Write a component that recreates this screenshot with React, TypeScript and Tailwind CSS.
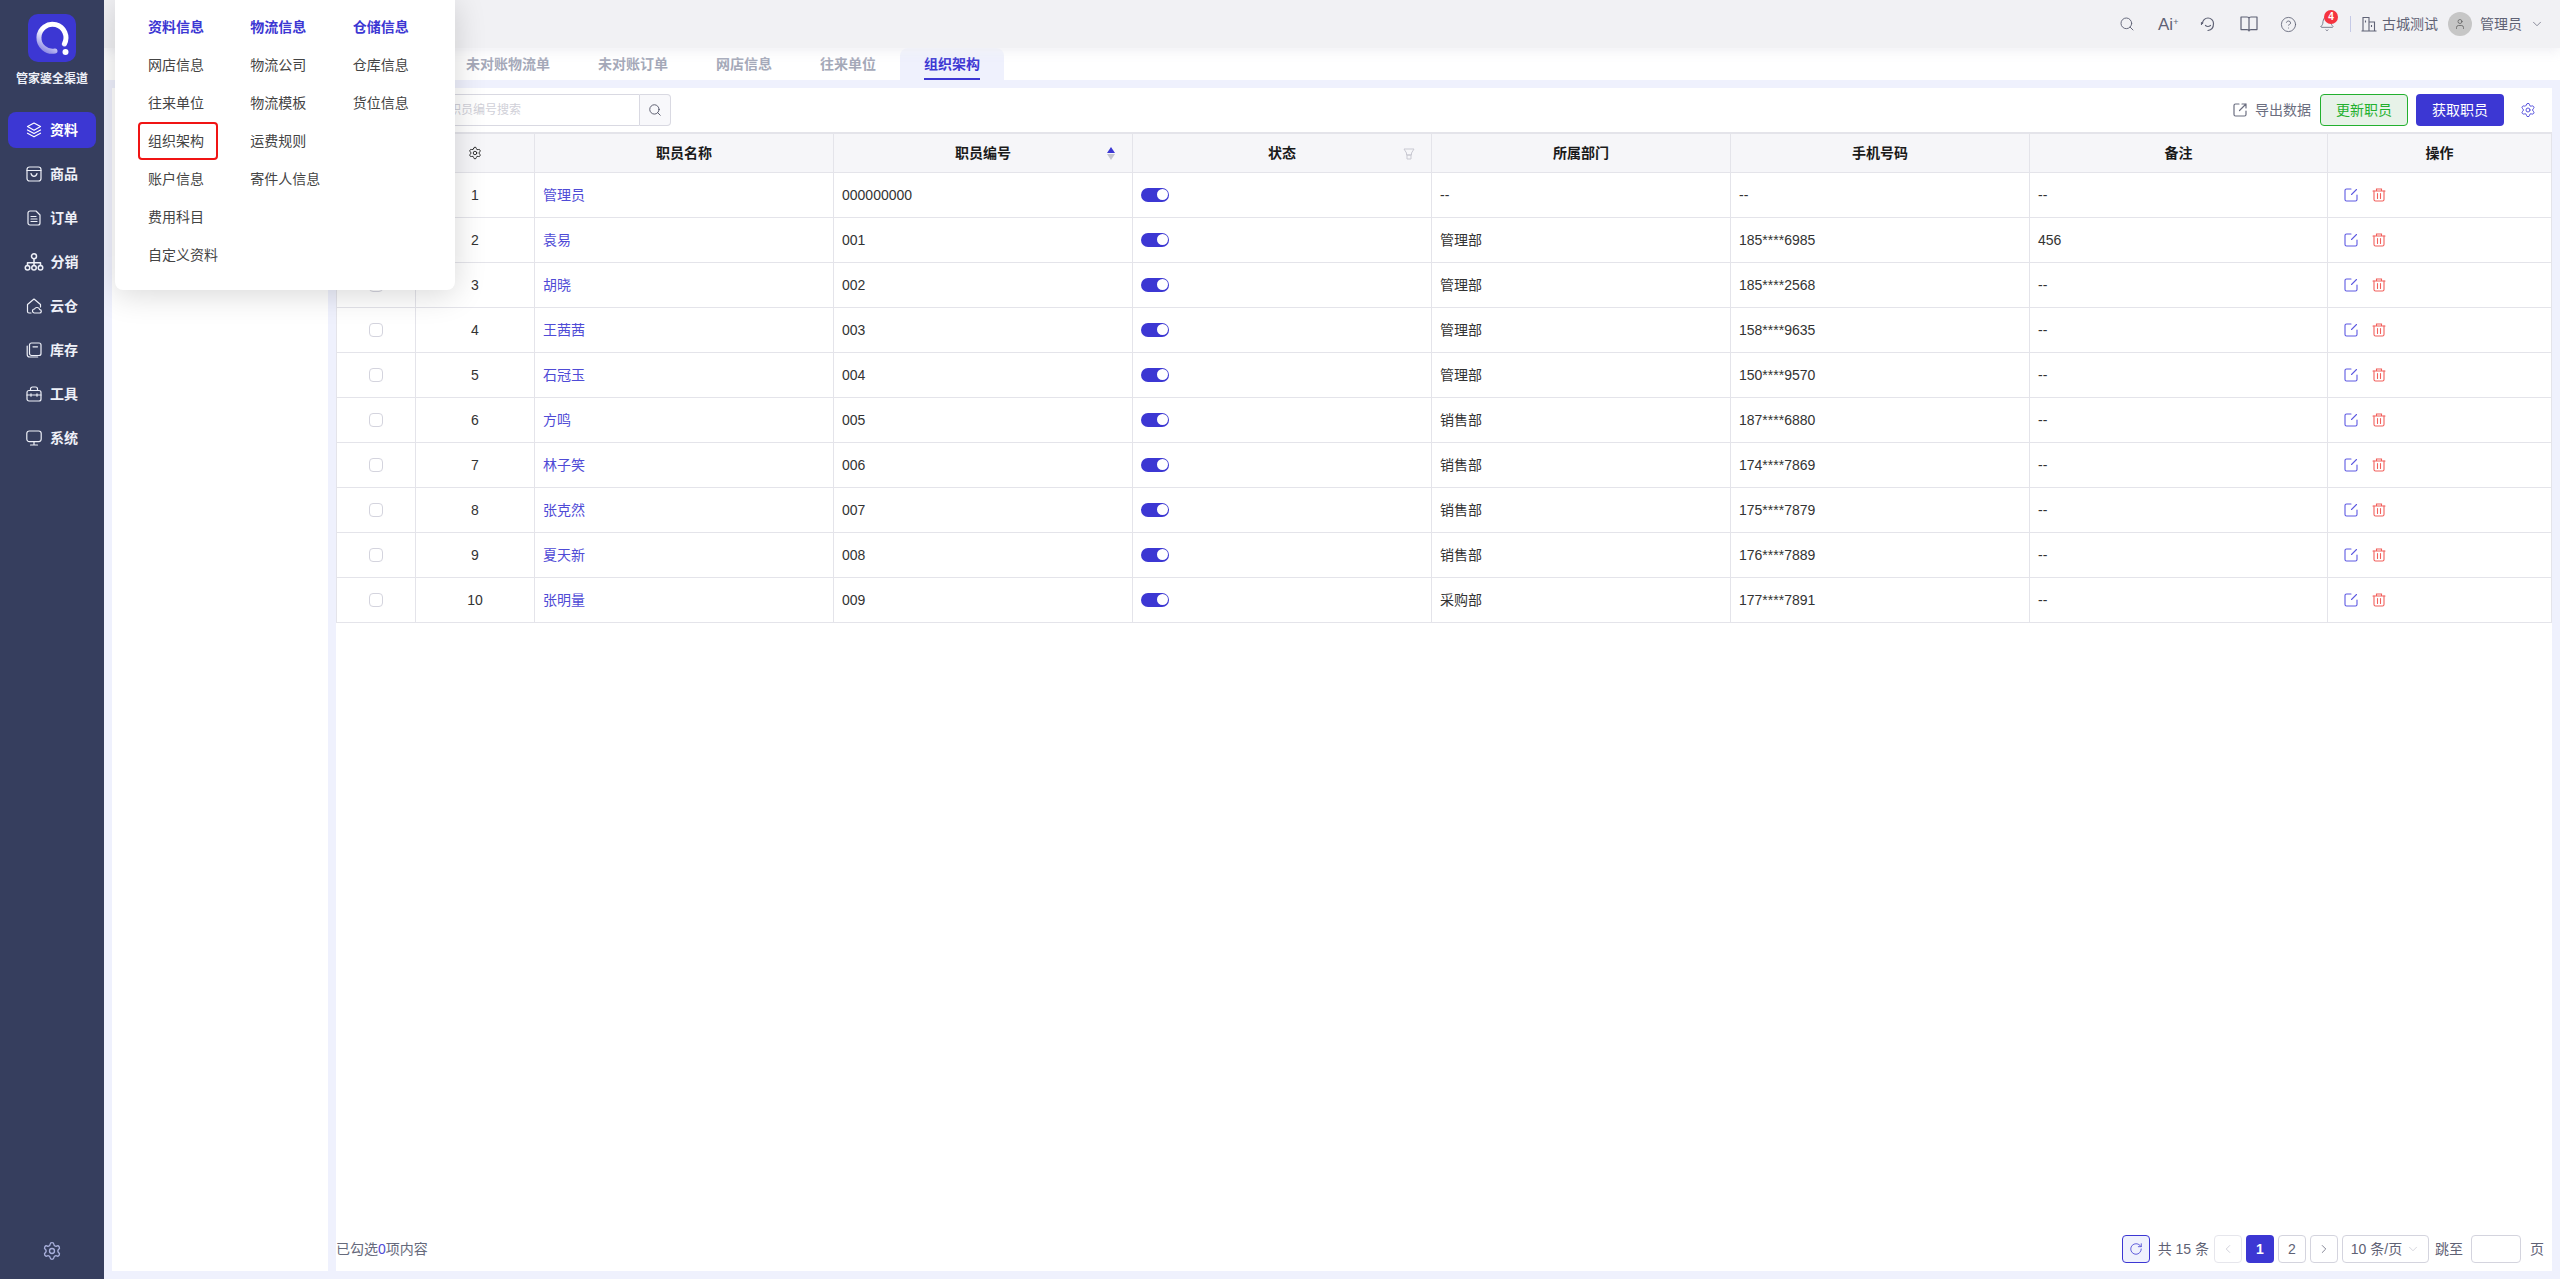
import { Bell, ChevronDown, ChevronLeft, ChevronRight, CircleHelp, RotateCw, Search, Settings, User } from 'lucide-react';

const rows = [
    ['1', '管理员', '000000000', '--', '--', '--'],
    ['2', '袁易', '001', '管理部', '185****6985', '456'],
    ['3', '胡晓', '002', '管理部', '185****2568', '--'],
    ['4', '王茜茜', '003', '管理部', '158****9635', '--'],
    ['5', '石冠玉', '004', '管理部', '150****9570', '--'],
    ['6', '方鸣', '005', '销售部', '187****6880', '--'],
    ['7', '林子笑', '006', '销售部', '174****7869', '--'],
    ['8', '张克然', '007', '销售部', '175****7879', '--'],
    ['9', '夏天新', '008', '销售部', '176****7889', '--'],
    ['10', '张明量', '009', '采购部', '177****7891', '--'],
];

const menu = [
    { title: '资料信息', items: ['网店信息', '往来单位', '组织架构', '账户信息', '费用科目', '自定义资料'] },
    { title: '物流信息', items: ['物流公司', '物流模板', '运费规则', '寄件人信息'] },
    { title: '仓储信息', items: ['仓库信息', '货位信息'] },
];

function Ico({ children, className }: { children: React.ReactNode; className?: string }) {
    return (
        <svg viewBox="0 0 16 16" fill="none" stroke="currentColor" strokeWidth="1.2" strokeLinecap="round" strokeLinejoin="round" className={className ?? 'w-4 h-4'}>
            {children}
        </svg>
    );
}

const navItems: { label: string; icon: React.ReactNode }[] = [
    {
        label: '资料',
        icon: (
            <Ico>
                <path d="M8 1 14.5 4.6 8 8.2 1.5 4.6Z" />
                <path d="M1.5 8 8 11.6 14.5 8" />
                <path d="M1.5 11.2 8 14.8 14.5 11.2" />
            </Ico>
        ),
    },
    {
        label: '商品',
        icon: (
            <Ico>
                <rect x="1" y="1" width="14" height="14" rx="2.5" />
                <path d="M1 4.5h14" />
                <path d="M5 7.5c.6 2 1.6 2.8 3 2.8s2.4-.8 3-2.8" />
            </Ico>
        ),
    },
    {
        label: '订单',
        icon: (
            <Ico>
                <path d="M4 1h6l4 4v8a2 2 0 0 1-2 2H4a2 2 0 0 1-2-2V3a2 2 0 0 1 2-2Z" />
                <path d="M5 6.5h5M5 9h6M5 11.5h6" />
            </Ico>
        ),
    },
    {
        label: '分销',
        icon: (
            <Ico className="w-[20px] h-[20px] -ml-[2px] -mr-[1px]">
                <circle cx="8" cy="3.4" r="2" />
                <circle cx="2.8" cy="12.6" r="1.8" />
                <circle cx="8" cy="12.6" r="1.8" />
                <circle cx="13.2" cy="12.6" r="1.8" />
                <path d="M8 5.4v5.4M2.8 10.8V8.6h10.4v2.2" />
            </Ico>
        ),
    },
    {
        label: '云仓',
        icon: (
            <Ico>
                <path d="M5 15H3a1.5 1.5 0 0 1-1.5-1.5V6.5L8 1l6.5 5.5V9" />
                <path d="M8.5 15a2 2 0 0 1 0-4 2.8 2.8 0 0 1 5.2.6A1.7 1.7 0 0 1 13.5 15Z" />
            </Ico>
        ),
    },
    {
        label: '库存',
        icon: (
            <Ico>
                <rect x="3.5" y="1" width="11.5" height="12.5" rx="2" />
                <path d="M1.2 4v8.5a2.5 2.5 0 0 0 2.5 2.5h8" />
                <path d="M7 4.8h4.5" />
            </Ico>
        ),
    },
    {
        label: '工具',
        icon: (
            <Ico>
                <rect x="1" y="4.5" width="14" height="10.5" rx="2" />
                <path d="M4.5 4.5V3A2 2 0 0 1 6.5 1h3a2 2 0 0 1 2 2v1.5" />
                <path d="M1 9h14M5 7.8v2.4M11 7.8v2.4" />
            </Ico>
        ),
    },
    {
        label: '系统',
        icon: (
            <Ico>
                <rect x="0.8" y="1" width="14.4" height="10.6" rx="2.5" />
                <path d="M8 11.6V15M4.5 15h7" />
            </Ico>
        ),
    },
];

function EditIcon() {
    return (
        <svg viewBox="0 0 14 14" fill="none" stroke="#5d59e2" strokeWidth="1.1" strokeLinecap="round" className="w-[14px] h-[14px]">
            <path d="M7 1H2.5A1.5 1.5 0 0 0 1 2.5v9A1.5 1.5 0 0 0 2.5 13h9a1.5 1.5 0 0 0 1.5-1.5V7" />
            <path d="M12.5 1.5 7.5 6.5" />
        </svg>
    );
}

function TrashIcon() {
    return (
        <svg viewBox="0 0 14 14" fill="none" stroke="#f2605c" strokeWidth="1.1" strokeLinecap="round" className="w-[14px] h-[14px]">
            <path d="M1 3h12M4.5 3V1h5v2" />
            <path d="M2 3v8.5A1.5 1.5 0 0 0 3.5 13h7a1.5 1.5 0 0 0 1.5-1.5V3" />
            <path d="M5.5 5.5v5M8.5 5.5v5" />
        </svg>
    );
}

function PageBox({ children, active, dim }: { children: React.ReactNode; active?: boolean; dim?: boolean }) {
    return (
        <div
            className={
                active
                    ? 'w-7 h-7 flex items-center justify-center rounded bg-[#3c37d3] text-white font-bold'
                    : dim
                      ? 'w-7 h-7 flex items-center justify-center rounded border border-[#e6e6ec] text-[#c4c4cf]'
                      : 'w-7 h-7 flex items-center justify-center rounded border border-[#d4d4de] text-[#5f6275]'
            }
        >
            {children}
        </div>
    );
}

export default function App() {
    return (
        <div
            className="relative flex h-screen overflow-hidden bg-[#eff1fd] text-sm text-[#333]"
            style={{ fontFamily: '"Liberation Sans", "Noto Sans CJK SC", sans-serif' }}
        >
            {/* sidebar */}
            <aside className="relative z-20 w-[104px] shrink-0 flex flex-col items-center bg-[#363e5e] text-white">
                <div className="mt-[14px] w-12 h-12 rounded-[10px] bg-[#3c37d3]">
                    <svg viewBox="0 0 48 48" className="w-12 h-12" fill="none">
                        <defs>
                            <linearGradient id="ring" x1="0.8" y1="0" x2="0.2" y2="1">
                                <stop offset="0.45" stopColor="#ffffff" />
                                <stop offset="1" stopColor="#8f8ce6" />
                            </linearGradient>
                        </defs>
                        <path d="M36.4 30A13.5 13.5 0 1 0 27 37" stroke="url(#ring)" strokeWidth="5" strokeLinecap="round" />
                        <circle cx="37.5" cy="38" r="3" fill="#fff" />
                    </svg>
                </div>
                <div className="mt-2 text-xs font-bold leading-[18px] text-[#eef0f8]">管家婆全渠道</div>
                <nav className="mt-[24px] flex flex-col gap-2 w-full px-2">
                    {navItems.map((item, i) => (
                        <div
                            key={item.label}
                            className={
                                i === 0
                                    ? 'h-9 flex items-center justify-center gap-2 rounded-lg bg-[#3c37d3] font-bold'
                                    : 'h-9 flex items-center justify-center gap-2 rounded-lg font-bold text-[#eef0f8]'
                            }
                        >
                            {item.icon}
                            <span>{item.label}</span>
                        </div>
                    ))}
                </nav>
                <div className="mt-auto mb-[18px] text-[#a9b0dc]">
                    <Settings className="w-5 h-5" strokeWidth={1.6} />
                </div>
            </aside>

            <div className="flex-1 min-w-0 flex flex-col">
                {/* top bar */}
                <header className="relative z-[1] h-12 shrink-0 flex items-center justify-end pr-[16px] bg-[#f1f1f4] shadow-[0_4px_10px_rgba(240,240,244,0.9)] text-[#5f6275]">
                    <Search className="w-[16px] h-[16px] mr-[23px]" strokeWidth={1.4} />
                    <span className="w-[20px] mr-[22px] text-[17px] leading-none">
                        Ai<sup className="text-[9px]">+</sup>
                    </span>
                    <svg viewBox="0 0 16 16" fill="none" stroke="currentColor" strokeWidth="1.2" strokeLinecap="round" className="w-[16px] h-[16px] mr-[24px]">
                        <path d="M2.5 7.5a5.5 5.5 0 0 1 11 0c0 3.5-2 6.5-5.5 7" />
                        <path d="M1.5 6.5v2M5.5 9.5c1.4 1.2 3.4 1.2 5 0" />
                    </svg>
                    <svg viewBox="0 0 18 16" fill="none" stroke="currentColor" strokeWidth="1.2" strokeLinejoin="round" className="w-[18px] h-[16px] mr-[22px]">
                        <path d="M1 1h6c1.2 0 2 .6 2 1.6V15c0-.8-.8-1.4-2-1.4H1ZM17 1h-6c-1.2 0-2 .6-2 1.6V15c0-.8.8-1.4 2-1.4h6Z" />
                    </svg>
                    <CircleHelp className="w-[17px] h-[17px] mr-[22px]" strokeWidth={1.2} />
                    <div className="relative mr-[15px]">
                        <Bell className="w-[16px] h-[16px]" strokeWidth={1.2} />
                        <span className="absolute -top-[6px] left-[5px] w-[14px] h-[14px] rounded-full bg-[#f5333f] text-white text-[10px] font-bold leading-[14px] text-center">4</span>
                    </div>
                    <div className="w-px h-4 bg-[#c5c9e6] mr-[10px]" />
                    <svg viewBox="0 0 16 16" fill="none" stroke="currentColor" strokeWidth="1.1" className="w-[16px] h-[16px] mr-[5px]">
                        <path d="M0.5 15h15M2 15V1.5h6V15M8 6h5.5V15M4.5 4.5v2M10.5 9v2" />
                    </svg>
                    <span className="mr-[10px]">古城测试</span>
                    <div className="w-6 h-6 rounded-full bg-[#c6c6c6] flex items-center justify-center mr-2">
                        <User className="w-[12px] h-[12px] text-[#555]" strokeWidth={1.4} />
                    </div>
                    <span className="mr-[8px]">管理员</span>
                    <ChevronDown className="w-[14px] h-[14px]" strokeWidth={1.2} />
                </header>

                {/* tabs */}
                <div className="h-8 shrink-0 flex items-center pl-[338px] bg-white font-bold text-[#a4a8b8]">
                    {['未对账物流单', '未对账订单', '网店信息', '往来单位'].map((t) => (
                        <div key={t} className="px-6 h-8 leading-8 whitespace-nowrap">{t}</div>
                    ))}
                    <div className="relative px-6 h-8 leading-8 rounded-t-lg bg-[#eff1fd] text-[#3c37d3]">
                        组织架构
                        <div className="absolute left-6 right-6 bottom-0 h-[2px] bg-[#3c37d3]" />
                    </div>
                </div>

                <div className="flex-1 min-h-0 flex gap-2 p-2">
                    {/* left tree panel */}
                    <div className="w-[216px] shrink-0 bg-white" />

                    {/* main panel */}
                    <main className="flex-1 min-w-0 flex flex-col bg-white">
                        <div className="h-11 shrink-0 flex items-center justify-between">
                            <div className="ml-[8px] flex h-8">
                                <div className="w-[296px] flex items-center justify-end pr-[118px] rounded-l border border-[#d9d9e2] text-xs text-[#d0d0d8]">
                                    职员名称/职员编号搜索
                                </div>
                                <div className="w-[31px] flex items-center justify-center rounded-r border border-l-0 border-[#d9d9e2] bg-[#f8f8fb] text-[#4a4d60]">
                                    <Search className="w-[14px] h-[14px]" strokeWidth={1.5} />
                                </div>
                            </div>
                            <div className="flex items-center text-[#6b6e80]">
                                <svg viewBox="0 0 14 14" fill="none" stroke="currentColor" strokeWidth="1.2" strokeLinecap="round" strokeLinejoin="round" className="w-[14px] h-[14px] mr-2">
                                    <path d="M6 1H2.5A1.5 1.5 0 0 0 1 2.5v9A1.5 1.5 0 0 0 2.5 13h9a1.5 1.5 0 0 0 1.5-1.5V8" />
                                    <path d="M6.5 7.5 13 1M9 1h4v4" />
                                </svg>
                                <span className="mr-[9px]">导出数据</span>
                                <div className="w-[88px] h-8 flex items-center justify-center rounded border border-[#22b02e] bg-[#e7f2e8] text-[#22b02e] mr-2">更新职员</div>
                                <div className="w-[88px] h-8 flex items-center justify-center rounded bg-[#3c37d3] text-white">获取职员</div>
                                <Settings className="w-[16px] h-[16px] mx-4 text-[#4c48da]" strokeWidth={1.4} />
                            </div>
                        </div>

                        <table className="w-full table-fixed border-collapse border-t-2 border-[#e4e4ea]">
                            <colgroup>
                                <col className="w-[79px]" />
                                <col className="w-[119px]" />
                                <col className="w-[299px]" />
                                <col className="w-[299px]" />
                                <col className="w-[299px]" />
                                <col className="w-[299px]" />
                                <col className="w-[299px]" />
                                <col className="w-[298px]" />
                                <col />
                            </colgroup>
                            <thead>
                                <tr className="h-[39px] bg-[#f6f6f9] text-[#1a1a1a] font-bold">
                                    <th className="border border-[#e4e4ea]" />
                                    <th className="border border-[#e4e4ea]">
                                        <Settings className="w-[14px] h-[14px] mx-auto" strokeWidth={1.5} />
                                    </th>
                                    <th className="border border-[#e4e4ea]">职员名称</th>
                                    <th className="relative border border-[#e4e4ea]">
                                        职员编号
                                        <div className="absolute right-[17px] top-[13px] flex flex-col gap-[1px]">
                                            <div className="w-0 h-0 border-x-[4px] border-x-transparent border-b-[6px] border-b-[#3c37d3]" />
                                            <div className="w-0 h-0 border-x-[4px] border-x-transparent border-t-[6px] border-t-[#c4c4cf]" />
                                        </div>
                                    </th>
                                    <th className="relative border border-[#e4e4ea]">
                                        状态
                                        <svg viewBox="0 0 12 12" fill="none" stroke="#c9c9d2" strokeWidth="1" className="absolute right-[16px] top-[14px] w-3 h-3">
                                            <path d="M1 1h10L8.5 5v2h-5V5ZM4 7h4v4H4Z" />
                                        </svg>
                                    </th>
                                    <th className="border border-[#e4e4ea]">所属部门</th>
                                    <th className="border border-[#e4e4ea]">手机号码</th>
                                    <th className="border border-[#e4e4ea]">备注</th>
                                    <th className="border border-[#e4e4ea]">操作</th>
                                </tr>
                            </thead>
                            <tbody>
                                {rows.map((r) => (
                                    <tr key={r[0]} className="h-[45px]">
                                        <td className="border border-[#e4e4ea]">
                                            <div className="w-[14px] h-[14px] mx-auto rounded-sm border border-[#d4d4de]" />
                                        </td>
                                        <td className="border border-[#e4e4ea] text-center">{r[0]}</td>
                                        <td className="border border-[#e4e4ea] px-2 text-[#4f4bd6]">{r[1]}</td>
                                        <td className="border border-[#e4e4ea] px-2">{r[2]}</td>
                                        <td className="border border-[#e4e4ea] px-2">
                                            <div className="w-7 h-[14px] flex items-center justify-end rounded-full bg-[#3c37d3] pr-[1px]">
                                                <div className="w-[11px] h-[11px] rounded-full bg-white" />
                                            </div>
                                        </td>
                                        <td className="border border-[#e4e4ea] px-2">{r[3]}</td>
                                        <td className="border border-[#e4e4ea] px-2">{r[4]}</td>
                                        <td className="border border-[#e4e4ea] px-2">{r[5]}</td>
                                        <td className="border border-[#e4e4ea] px-2">
                                            <div className="flex items-center gap-[14px] pl-[8px]">
                                                <EditIcon />
                                                <TrashIcon />
                                            </div>
                                        </td>
                                    </tr>
                                ))}
                            </tbody>
                        </table>

                        {/* footer */}
                        <div className="mt-auto h-9 shrink-0 flex items-center justify-between pb-[8px] text-[#666a7c]">
                            <div className="leading-none">
                                已勾选<span className="text-[#4f4bd6]">0</span>项内容
                            </div>
                            <div className="flex items-center text-[#5f6275]">
                                <div className="w-7 h-7 flex items-center justify-center rounded border border-[#3c37d3] bg-[#eff1fd] text-[#4f4bd6] mr-2">
                                    <RotateCw className="w-[14px] h-[14px]" strokeWidth={1.5} />
                                </div>
                                <span className="mr-[5px]">共 15 条</span>
                                <div className="flex gap-1 mr-1">
                                    <PageBox dim><ChevronLeft className="w-[14px] h-[14px]" strokeWidth={1.3} /></PageBox>
                                    <PageBox active>1</PageBox>
                                    <PageBox>2</PageBox>
                                    <PageBox><ChevronRight className="w-[14px] h-[14px]" strokeWidth={1.3} /></PageBox>
                                </div>
                                <div className="w-[87px] h-7 flex items-center justify-center gap-1 rounded border border-[#d4d4de] mr-[6px]">
                                    10 条/页
                                    <ChevronDown className="w-[14px] h-[14px] text-[#c4c4cf]" strokeWidth={1.2} />
                                </div>
                                <span className="mr-2">跳至</span>
                                <div className="w-[50px] h-7 rounded border border-[#d4d4de] mr-[9px]" />
                                <span className="mr-2">页</span>
                            </div>
                        </div>
                    </main>
                </div>
            </div>

            {/* hover menu */}
            <div className="absolute z-10 left-[115px] top-0 w-[340px] h-[290px] flex pl-[33px] pt-2 bg-white rounded-b-lg shadow-[0_4px_32px_rgba(0,0,0,0.16)]">
                {menu.map((col) => (
                    <div key={col.title} className="w-[110px]">
                        <div className="h-[38px] leading-[38px] font-bold text-[#3c37d3]">{col.title}</div>
                        {col.items.map((item) => (
                            <div key={item} className="relative h-[38px] leading-[38px] text-[#444]">
                                {item}
                                {item === '组织架构' && (
                                    <div className="absolute -left-[10px] top-0 w-[80px] h-[38px] rounded border-2 border-[#f01414]" />
                                )}
                            </div>
                        ))}
                    </div>
                ))}
            </div>
        </div>
    );
}
